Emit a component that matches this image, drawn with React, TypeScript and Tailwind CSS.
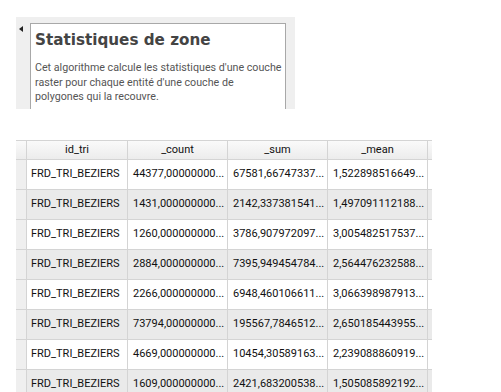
import React from 'react';

type Row = {
  id: string;
  count: string;
  sum: string;
  mean: string;
};

const rows: Row[] = [
  { id: 'FRD_TRI_BEZIERS', count: '44377,00000000...', sum: '67581,66747337...', mean: '1,522898516649...' },
  { id: 'FRD_TRI_BEZIERS', count: '1431,000000000...', sum: '2142,337381541...', mean: '1,497091112188...' },
  { id: 'FRD_TRI_BEZIERS', count: '1260,000000000...', sum: '3786,907972097...', mean: '3,005482517537...' },
  { id: 'FRD_TRI_BEZIERS', count: '2884,000000000...', sum: '7395,949454784...', mean: '2,564476232588...' },
  { id: 'FRD_TRI_BEZIERS', count: '2266,000000000...', sum: '6948,460106611...', mean: '3,066398987913...' },
  { id: 'FRD_TRI_BEZIERS', count: '73794,00000000...', sum: '195567,7846512...', mean: '2,650185443955...' },
  { id: 'FRD_TRI_BEZIERS', count: '4669,000000000...', sum: '10454,30589163...', mean: '2,239088860919...' },
  { id: 'FRD_TRI_BEZIERS', count: '1609,000000000...', sum: '2421,683200538...', mean: '1,505085892192...' },
];

const cell = 'flex items-center border-r border-[#d4d4d4] shrink-0 overflow-hidden whitespace-nowrap';

export default function App() {
  return (
    <div className="w-[501px] h-[392px] overflow-hidden bg-white" style={{ fontFamily: 'Roboto, sans-serif' }}>
      {/* help panel */}
      <div className="ml-[16px] mt-[17px] w-[279px] h-[92px] bg-[#efefef] flex">
        <div className="w-[14px] pt-[9px] pl-[3px]">
          <div className="w-0 h-0 border-y-[3px] border-y-transparent border-r-[4px] border-r-[#222]" />
        </div>
        <div className="mt-[6px] w-[256px] bg-white border-t border-x border-[#a8a8a8] pl-[4px] pt-[6px]">
          <div
            className="text-[15.2px] font-bold text-[#444] leading-[20px]"
            style={{ fontFamily: '"DejaVu Sans", sans-serif' }}
          >
            Statistiques de zone
          </div>
          <p className="mt-[11px] text-[10.7px] leading-[14.5px] text-[#555]">
            Cet algorithme calcule les statistiques d'une couche raster pour chaque entité d'une couche de polygones qui la recouvre.
          </p>
        </div>
      </div>

      {/* attribute table */}
      <div className="mt-[31px] ml-[16px] text-[11px] text-[#111]">
        <div className="flex h-[20px] border-y border-[#d4d4d4] bg-gradient-to-b from-[#fafafa] to-[#ececec] w-[416px]">
          <div className={`${cell} w-[11px]`} />
          <div className={`${cell} w-[101px] justify-center`}>id_tri</div>
          <div className={`${cell} w-[100px] justify-center`}>_count</div>
          <div className={`${cell} w-[100px] justify-center`}>_sum</div>
          <div className={`${cell} w-[100px] justify-center`}>_mean</div>
          <div className="w-[4px]" />
        </div>
        {rows.map((r, i) => (
          <div
            key={i}
            className={`flex h-[30px] border-b border-[#d4d4d4] w-[416px] ${i % 2 === 1 ? 'bg-[#eaeaea]' : 'bg-white'}`}
          >
            <div className={`${cell} w-[11px] bg-[#efefef]`} />
            <div className={`${cell} w-[101px] pl-[4px]`}>{r.id}</div>
            <div className={`${cell} w-[100px] pl-[5px]`}>{r.count}</div>
            <div className={`${cell} w-[100px] pl-[5px]`}>{r.sum}</div>
            <div className={`${cell} w-[100px] pl-[5px]`}>{r.mean}</div>
            <div className="w-[4px]" />
          </div>
        ))}
      </div>
    </div>
  );
}
